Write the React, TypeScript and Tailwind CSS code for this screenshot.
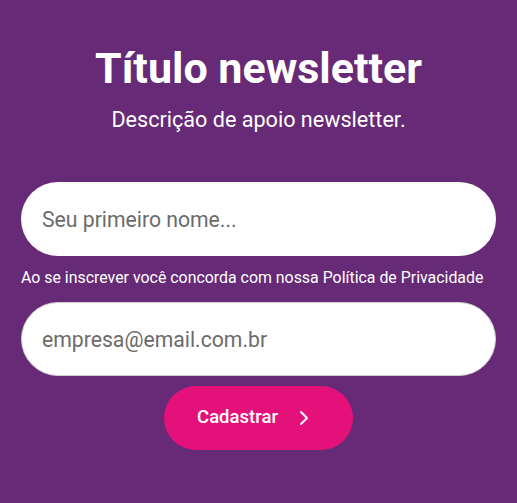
import React from 'react';
import { ChevronRight } from 'lucide-react';

export default function App() {
  return (
    <div
      className="w-[517px] h-[503px] bg-[#662a76] flex flex-col px-[21px] pt-[40px]"
      style={{ fontFamily: 'Roboto, "Noto Sans", sans-serif' }}
    >
      <h1 className="text-center text-white font-bold text-[43px] leading-[56px]">Título newsletter</h1>
      <p className="text-center text-white text-[21.6px] leading-[28px] mt-[10px]">Descrição de apoio newsletter.</p>

      <form className="flex flex-col mt-[48px]" onSubmit={(e) => e.preventDefault()}>
        <input
          type="text"
          placeholder="Seu primeiro nome..."
          className="h-[74px] w-full rounded-full bg-white px-[21px] text-[21.2px] text-gray-800 placeholder:text-[#6b6b6b] outline-none"
        />
        <p className="text-white text-[15.9px] leading-[20px] mt-[12px] mb-[14px]">
          Ao se inscrever você concorda com nossa Política de Privacidade
        </p>
        <input
          type="email"
          placeholder="empresa@email.com.br"
          className="h-[74px] w-full rounded-full bg-white border border-[#cfcfcf] px-[20px] text-[21.2px] text-gray-800 placeholder:text-[#6b6b6b] outline-none"
        />
        <div className="flex justify-center mt-[10px]">
          <button
            type="submit"
            className="h-[64px] w-[189px] rounded-full bg-[#e5117a] text-white text-[18.5px] font-medium flex items-center justify-center gap-[14px] pr-[4px]"
          >
            <span>Cadastrar</span>
            <ChevronRight size={24} strokeWidth={2} />
          </button>
        </div>
      </form>
    </div>
  );
}
